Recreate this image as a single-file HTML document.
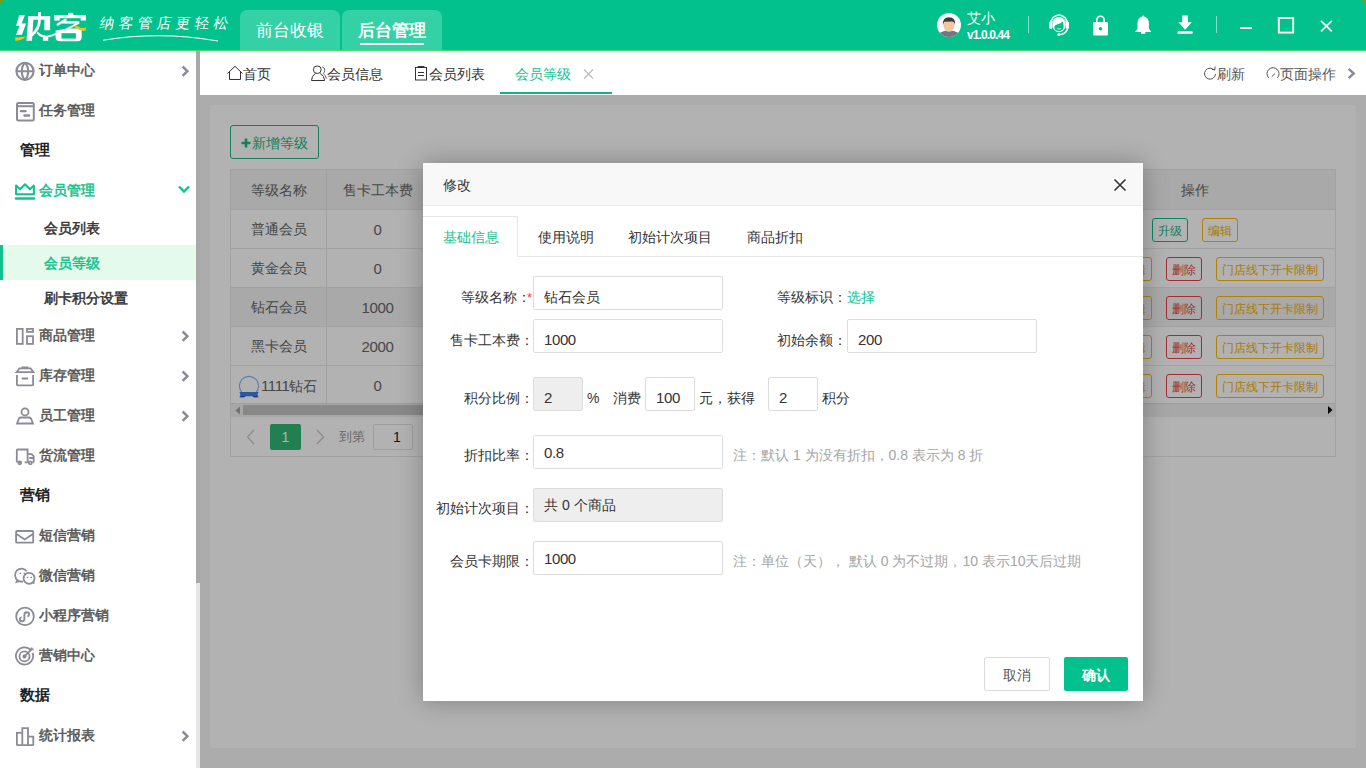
<!DOCTYPE html>
<html><head><meta charset="utf-8">
<style>
*{box-sizing:border-box;margin:0;padding:0}
html,body{width:1366px;height:768px;overflow:hidden;background:#fff;font-family:"Liberation Sans",sans-serif;font-size:14px;color:#333}
.abs{position:absolute}
#hdr{position:absolute;left:0;top:0;width:1366px;height:51px;background:#02c18d;border-bottom:1px solid #4fdc74}
.htab{position:absolute;top:10px;height:40px;width:100px;background:#35d1a6;border-radius:7px 7px 0 0;color:#fff;font-size:17px;text-align:center;line-height:41px}
#side{position:absolute;left:0;top:51px;width:196px;height:717px;background:#fff}
.si{position:absolute;left:0;width:196px;height:40px;line-height:40px;font-size:14px;font-weight:bold;color:#555}
.si .t{position:absolute;left:39px;top:0}
.si svg.ic{position:absolute;left:15px;top:11px}
.si .ar{position:absolute;left:180px;top:15px}
.st{position:absolute;line-height:20px;font-weight:500;white-space:nowrap;-webkit-text-stroke:0.5px currentColor}
.cell{position:absolute;height:39px;line-height:41px;text-align:center;font-size:14px;color:#666;white-space:nowrap}
.btn{position:absolute;height:24px;border:1px solid;border-radius:3px;font-size:12px;line-height:24px;text-align:center;white-space:nowrap;background:transparent}
.mt{position:absolute;top:64px;line-height:20px;font-size:14px;color:#333;white-space:nowrap}
.lb{position:absolute;line-height:20px;font-size:14px;color:#333;white-space:nowrap}
.inp{position:absolute;height:34px;border:1px solid #ddd;border-radius:2px;padding-left:10px;line-height:40px;font-size:14px;color:#333;white-space:nowrap}
.dg{font-size:15px;letter-spacing:-0.4px}
.sh{position:absolute;left:20px;font-size:15px;font-weight:bold;color:#222;line-height:20px}
.sub{position:absolute;left:0;width:196px;height:35px;line-height:35px;font-size:14px;font-weight:bold;color:#333}
.sub .t{position:absolute;left:44px;top:0}
#tabbar{position:absolute;left:200px;top:51px;width:1166px;height:44px;background:#fff}
.tt{position:absolute;top:0;height:44px;line-height:46px;font-size:14px;color:#333}
#main{position:absolute;left:200px;top:95px;width:1166px;height:673px;background:#f6f6f6}
#card{position:absolute;left:10px;top:10px;width:1146px;height:643px;background:#fff;border-radius:3px}
table.gt{position:absolute;border-collapse:collapse}
#ov{position:absolute;left:200px;top:95px;width:1166px;height:673px;background:rgba(0,0,0,0.3)}
#modal{position:absolute;left:423px;top:163px;width:720px;height:538px;background:#fff;box-shadow:0 0 24px rgba(0,0,0,.28)}
</style></head>
<body>
<!-- HEADER -->
<div id="hdr">
  <svg class="abs" style="left:0;top:0" width="240" height="50">
   <g fill="#fff">
    <path d="M19.2 15.2H24.9L21.6 23.6H26.1L21.9 34.8H16L19.5 26H16Z"/>
    <path d="M28.4 16.2H33.6L32 40.8H26.4Z"/>
    <path d="M28.4 16.2H50.1V19.7H28.4Z"/>
    <path d="M44.4 16.2H50.1V30.2H44.3Z"/>
    <path d="M38 12H40.9V19.7H38Z"/>
    <path d="M39.5 19.5Q39.6 28.5 31.5 35.5" fill="none" stroke="#fff" stroke-width="2.8"/>
    <path d="M42.9 37H48.2V40.8H42.9Z"/>
    <path d="M37.6 31.6Q41 35.6 46.5 35.8Q55 35 79.2 21.6L79.6 23.6Q62 33 52 36.5Q46 38.2 41.5 37Q38.5 36 36.8 33.6Z"/>
    <path d="M54.3 15H86V18.2H54.3Z"/><path d="M54.3 15H59.7V20.6H54.3Z"/><path d="M80.7 15H86V20.6H80.7Z"/><path d="M68 12.8H73.2V15.5H68Z"/>
    <path d="M57.8 24.6L65.6 19.7" fill="none" stroke="#fff" stroke-width="2.4" stroke-linecap="round"/>
    <path d="M62.2 22.4H78.8" fill="none" stroke="#fff" stroke-width="2.4"/>
    <path d="M55.6 30.4Q64 29.4 70 28.6H81.7V37.6Q81.7 41.3 77.6 41.3H60Q55.6 41.3 55.6 37.6Z"/>
   </g>
   <path d="M61.5 33.2H75.9V38.6H61.5Z" fill="#02c18d"/>
   <path d="M15.2 37.6Q20.5 37.3 25.5 36.4Q24.5 38.6 20.8 39.7Q17.8 40.7 15.4 40.9Z" fill="#fcc20a"/>
   <path d="M73.7 26.2Q77.5 25.6 80 27.4Q83 28.6 86 27.2L85.7 30.6Q81.5 31.2 78.5 29.6Q76 28 73.7 26.2Z" fill="#fcc20a"/>
   <path d="M103 40.3Q160 31 218 41" fill="none" stroke="#fff" stroke-width="1.1"/>
  </svg>
  <div class="abs" style="left:100px;top:10px;font-size:14.5px;font-weight:300;color:#fff;line-height:26px;letter-spacing:4px;transform:skewX(-10deg)">纳客管店更轻松</div>
  <div class="htab" style="left:240px">前台收银</div>
  <div class="htab" style="left:342px;font-weight:bold">后台管理<div class="abs" style="left:18px;top:33px;width:64px;height:2px;background:#fff"></div></div>
  <!-- avatar -->

  <svg class="abs" style="left:0;top:0" width="1366" height="50">
   <defs><clipPath id="avc"><circle cx="949" cy="25" r="12"/></clipPath></defs>
   <circle cx="949" cy="25" r="12" fill="#fff"/>
   <g clip-path="url(#avc)">
    <path d="M937 37Q938 31 949 30.5Q960 31 961 37Z" fill="#75758a"/>
    <path d="M946.8 28H951.2V31.5H946.8Z" fill="#f2c29a"/>
    <ellipse cx="949" cy="25.5" rx="5.6" ry="6" fill="#f4c7a0"/>
    <path d="M943 25Q942.2 17.5 949 17.3Q955.8 17.5 955 25Q954.5 21.8 952 21.5Q949 21.6 944.5 21.8Q943.5 22.5 943 25Z" fill="#3b3b3b"/>
   </g>
   <!-- headset -->
   <g fill="#fff">
    <path d="M1050.4 24.5A8.6 9.6 0 0 1 1067.6 24.5" fill="none" stroke="#fff" stroke-width="1.5"/>
    <path d="M1052.3 22.5A7 7.2 0 0 1 1065.7 22.5" fill="none" stroke="#fff" stroke-width="0.9"/>
    <rect x="1049" y="22" width="3.4" height="6.8" rx="1"/><rect x="1065.6" y="22" width="3.4" height="6.8" rx="1"/>
    <ellipse cx="1059" cy="24.8" rx="6.6" ry="7.4"/>
    <path d="M1054.3 27.8Q1054.3 24.8 1057.8 24.3Q1061 23.6 1062.6 21.3Q1063.9 25 1063.6 27.6Q1063.1 31 1059 31.1Q1054.9 31 1054.3 27.8Z" fill="#02c18d"/>
    <path d="M1057.2 28.6Q1059 29.4 1060.8 28.6" stroke="#fff" stroke-width="0.8" fill="none"/>
    <path d="M1067.6 28.5Q1066.5 33.8 1059.5 34.6" fill="none" stroke="#fff" stroke-width="1.3"/>
    <circle cx="1058.8" cy="34.6" r="1.5"/>
   </g>
   <!-- lock -->
   <path d="M1096.8 22.5V20A3.7 3.8 0 0 1 1104.2 20V22.5" fill="none" stroke="#fff" stroke-width="1.6"/>
   <rect x="1093" y="22" width="15" height="13.5" rx="1.2" fill="#fff"/>
   <circle cx="1100.5" cy="28.7" r="1.8" fill="#02c18d"/>
   <!-- bell -->
   <path d="M1143.2 15.5Q1144.2 15.5 1144.2 16.6Q1148.8 17.8 1148.9 23.5V28.6Q1149.3 30.5 1151.1 31.2V31.9H1135.3V31.2Q1137.1 30.5 1137.5 28.6V23.5Q1137.6 17.8 1142.2 16.6Q1142.2 15.5 1143.2 15.5Z" fill="#fff"/>
   <rect x="1141" y="32" width="4.4" height="1.8" rx="0.6" fill="#fff"/>
   <!-- download -->
   <path d="M1182.2 15.5H1188V22.3H1191.8L1185.1 29.7L1178.4 22.3H1182.2Z" fill="#fff"/>
   <rect x="1177.5" y="31.3" width="15.2" height="2.4" rx="0.8" fill="#fff"/>
   <!-- window controls -->
   <rect x="1240" y="27" width="12" height="2" fill="#fff"/>
   <rect x="1278.8" y="18" width="14.4" height="14.6" fill="none" stroke="#fffde8" stroke-width="1.9"/>
   <path d="M1321 20.8L1331.8 31.3M1331.8 20.8L1321 31.3" stroke="#fff" stroke-width="1.8"/>
  </svg>
  <div class="abs" style="left:967px;top:9px;font-size:14px;color:#fff;line-height:18px">艾小</div>
  <div class="abs" style="left:967px;top:28px;font-size:12px;font-weight:bold;color:#fff;line-height:14px;letter-spacing:-0.9px">v1.0.0.44</div>
  <div class="abs" style="left:1028px;top:16px;width:1px;height:17px;background:rgba(255,255,255,.5)"></div>
  <div class="abs" style="left:1216px;top:16px;width:1px;height:17px;background:rgba(255,255,255,.5)"></div>
</div>


<!-- SIDEBAR -->
<div id="side">
<svg class="abs" style="left:0;top:0" width="196" height="717" viewBox="0 51 196 717" fill="none" stroke="#8b8b97" stroke-width="1.8">
 <!-- globe -->
 <g stroke-width="2.1"><circle cx="25" cy="71.3" r="8.6"/><path d="M16.4 71.3H33.6M25 62.7C20.8 66.5 20.8 76 25 79.9M25 62.7C29.2 66.5 29.2 76 25 79.9"/></g>
 <!-- task -->
 <g stroke-width="2"><rect x="17" y="103" width="16.8" height="17.6" rx="1.5"/><path d="M17 106.2H33.8"/><path d="M20.8 111.2H25.6M24.4 115.5H29.2" stroke-width="2.3" stroke-linecap="round"/></g>
 <!-- crown green -->
 <path d="M16.1 185.6L20.1 189.3L25 184.3L29.9 189.3L33.9 185.6V194.3H16.1Z" stroke="#12c28d" stroke-width="2.1" stroke-linejoin="round"/><path d="M16.1 194.6H33.9" stroke="#12c28d" stroke-width="1.2"/><path d="M16 198.5H34" stroke="#12c28d" stroke-width="2.4" stroke-linecap="round"/>
 <!-- goods -->
 <rect x="16.9" y="328.9" width="5.8" height="15" /><rect x="27" y="328.9" width="6" height="3" /><rect x="27" y="336.2" width="6" height="7.7"/>
 <!-- stock -->
 <path d="M21.5 367.5H28.5M16.5 372.2L19.5 368.4H30.5L33.5 372.2Z" /><path d="M16.9 375V384.5Q16.9 385.3 17.7 385.3H32.3Q33.1 385.3 33.1 384.5V375M21.8 378.5H28.2"/>
 <!-- staff -->
 <circle cx="25" cy="411.9" r="3.5"/><path d="M17 423.5L19 418.5Q19.8 417.5 21 417.5H29Q30.2 417.5 31 418.5L33 423.5Z"/>
 <!-- truck -->
 <path d="M16.8 462.4V450.3Q16.8 449.5 17.6 449.5H27.6V462.4M27.6 454.1H31.5L33.7 456.2V462.4M29.2 458H33.7"/><path d="M18 462.4H21M24.6 462.4H28.9M32.6 462.4H33.7" /><circle cx="19.7" cy="462.8" r="1.5"/><circle cx="30.4" cy="462.8" r="1.5"/>
 <!-- envelope -->
 <rect x="16.1" y="531" width="17.1" height="11.7" rx="0.8"/><path d="M16.5 534L24.7 539.4L33 534"/>
 <!-- wechat -->
 <path d="M26.8 571.2A6.5 6.5 0 1 0 17.6 580.2L16.7 581.9L19.6 581.1A6.5 6.5 0 0 0 23 581.5"/><circle cx="29.1" cy="578.3" r="5.5"/><path d="M33 582.5L34.4 583.5" />
 <path d="M19.4 573.3H21M23.6 573.3H25.2M26.7 577.3H28.2M30.4 577.3H32" stroke-width="1.3"/>
 <!-- mini program -->
 <circle cx="25" cy="616.4" r="8.8"/><path d="M21.6 617.2Q19.8 617.7 19.8 619.6Q19.8 621.2 22 621.3Q24.4 621.3 24.4 618.7V614.8Q24.4 612.3 26.9 612.3Q29.1 612.4 29.1 614.3Q29.1 616 27.4 616.5" stroke-width="1.9"/>
 <!-- target -->
 <path d="M31.3 650.6A8.6 8.6 0 1 0 32.6 652.9" /><circle cx="24.5" cy="656.4" r="5"/><circle cx="24.5" cy="656.4" r="1.2" fill="#8b8b97"/><path d="M25 655.9L32.5 648.4M31.5 647.5V649.4H33.5"/>
 <!-- bars -->
 <path d="M16.9 745V732.9H22.3V745M22.3 745V728.2H28V745M28 745V736.6H33.3V745M16.5 745.1H33.7"/>
 <!-- arrows -->
 <g stroke-width="2.5"><path d="M182.6 66.5L187.4 71.2L182.6 75.9"/><path d="M182.6 331.5L187.4 336.2L182.6 340.9"/><path d="M182.6 371.5L187.4 376.2L182.6 380.9"/><path d="M182.6 411.5L187.4 416.2L182.6 420.9"/><path d="M182.6 731.5L187.4 736.2L182.6 740.9"/></g>
 <path d="M179 186.5L184 191.5L189 186.5" stroke="#12c28d" stroke-width="2.4"/>
</svg>
<div style="position:absolute;left:0;top:194px;width:196px;height:35px;background:#e4fbec"></div>
<div style="position:absolute;left:0;top:194px;width:3px;height:35px;background:#12c28d"></div>
</div>
<div class="abs" style="left:196px;top:51px;width:4px;height:532px;background:#a9a9a9"></div>
<div class="abs" style="left:196px;top:583px;width:4px;height:185px;background:#e6e6e6"></div>
<div class="st" style="left:39px;top:60px;font-size:14px;color:#555">订单中心</div>
<div class="st" style="left:39px;top:100px;font-size:14px;color:#555">任务管理</div>
<div class="st" style="left:20px;top:140px;font-size:15px;color:#222;font-weight:bold;-webkit-text-stroke:0">管理</div>
<div class="st" style="left:39px;top:180px;font-size:14px;color:#12c28d">会员管理</div>
<div class="st" style="left:44px;top:218px;font-size:14px;color:#333">会员列表</div>
<div class="st" style="left:44px;top:253px;font-size:14px;color:#12c28d">会员等级</div>
<div class="st" style="left:44px;top:288px;font-size:14px;color:#333">刷卡积分设置</div>
<div class="st" style="left:39px;top:325px;font-size:14px;color:#555">商品管理</div>
<div class="st" style="left:39px;top:365px;font-size:14px;color:#555">库存管理</div>
<div class="st" style="left:39px;top:405px;font-size:14px;color:#555">员工管理</div>
<div class="st" style="left:39px;top:445px;font-size:14px;color:#555">货流管理</div>
<div class="st" style="left:20px;top:485px;font-size:15px;color:#222;font-weight:bold;-webkit-text-stroke:0">营销</div>
<div class="st" style="left:39px;top:525px;font-size:14px;color:#555">短信营销</div>
<div class="st" style="left:39px;top:565px;font-size:14px;color:#555">微信营销</div>
<div class="st" style="left:39px;top:605px;font-size:14px;color:#555">小程序营销</div>
<div class="st" style="left:39px;top:645px;font-size:14px;color:#555">营销中心</div>
<div class="st" style="left:20px;top:685px;font-size:15px;color:#222;font-weight:bold;-webkit-text-stroke:0">数据</div>
<div class="st" style="left:39px;top:725px;font-size:14px;color:#555">统计报表</div>

<!-- TABBAR -->
<div id="tabbar">
<svg class="abs" style="left:0;top:0" width="1166" height="44" viewBox="200 51 1166 44" fill="none" stroke="#333" stroke-width="1">
 <path d="M227.5 73.5L235 66.3L242.5 73.5M229.5 71.5V79.5H240.5V71.5" />
 <ellipse cx="317.3" cy="69.7" rx="3.9" ry="3.8"/><path d="M315.5 73.4Q311.5 76 311.5 80.5H324.6Q324.6 76 320.2 73.4"/><path d="M322.2 66.8Q324.8 67.5 324.8 70.2Q324.8 72.5 323.2 73.6Q326 75.2 326.4 78.8" stroke="#555" stroke-width="0.9"/>
 <rect x="415.5" y="67.5" width="11" height="12.5"/><path d="M418 67.5V66.5H424V67.5M418 72.5H424M418 75.5H424"/>
 <path d="M584 69.5L593 78.5M593 69.5L584 78.5" stroke="#bbb" stroke-width="1.2"/>
 <path d="M1214.5 70.5A5.5 5.5 0 1 0 1215.5 74" stroke="#555"/><path d="M1212 69.5H1215V66.5" stroke="#555"/>
 <path d="M1268.6 77.8A6 6 0 1 1 1277.4 77.8M1271.8 76.6L1275.2 73.4" stroke="#555"/>
 <path d="M1348.6 68.8L1353.8 73.5L1348.6 78.2" stroke="#8b8b97" stroke-width="2.4"/>
</svg>
<div class="tt" style="left:43px">首页</div>
<div class="tt" style="left:127px">会员信息</div>
<div class="tt" style="left:229px">会员列表</div>
<div class="tt" style="left:315px;color:#12c28d">会员等级</div>
<div class="abs" style="left:300px;top:41px;width:112px;height:2px;background:#12b47f"></div>
<div class="tt" style="left:1017px;color:#555">刷新</div>
<div class="tt" style="left:1080px;color:#555">页面操作</div>
</div>

<!-- MAIN -->
<div id="main"><div id="card"></div></div>
<div class="abs" style="left:230px;top:125px;width:89px;height:34px;border:1px solid #22b583;border-radius:3px;color:#22b583;font-size:14px;line-height:35px;padding-left:10px;white-space:nowrap"><svg width="10" height="10" style="position:relative;top:0px;margin-right:1px"><path d="M5 0.5V9.5M0.5 5H9.5" stroke="#22b583" stroke-width="2.6"/></svg>新增等级</div>
<!-- table -->
<div class="abs" style="left:230px;top:169px;width:1106px;height:288px;border:1px solid #e8e8e8;background:#fff"></div>
<div class="abs" style="left:231px;top:170px;width:1104px;height:39px;background:#f2f2f2"></div>
<div class="abs" style="left:231px;top:287px;width:1104px;height:39px;background:#f2f2f2"></div>
<div class="abs" style="left:231px;top:209px;width:1104px;height:1px;background:#e8e8e8"></div>
<div class="abs" style="left:231px;top:248px;width:1104px;height:1px;background:#e8e8e8"></div>
<div class="abs" style="left:231px;top:287px;width:1104px;height:1px;background:#e8e8e8"></div>
<div class="abs" style="left:231px;top:326px;width:1104px;height:1px;background:#e8e8e8"></div>
<div class="abs" style="left:231px;top:365px;width:1104px;height:1px;background:#e8e8e8"></div>
<div class="abs" style="left:326px;top:170px;width:1px;height:234px;background:#e8e8e8"></div>
<div class="abs" style="left:428px;top:170px;width:1px;height:234px;background:#e8e8e8"></div>
<!-- scrollbar -->
<div class="abs" style="left:231px;top:403px;width:1104px;height:14px;background:#efefef;border-top:1px solid #e3e3e3"></div>
<div class="abs" style="left:243px;top:405px;width:900px;height:10px;background:#c4c4c4"></div>
<svg class="abs" style="left:234px;top:406px" width="8" height="9"><path d="M6 0.5V8.5L1.5 4.5Z" fill="#a3a3a3"/></svg>
<svg class="abs" style="left:1326px;top:405px" width="8" height="10"><path d="M2 1V9L6.5 5Z" fill="#000"/></svg>
<!-- cells -->
<div class="cell" style="left:231px;top:170px;width:95px">等级名称</div>
<div class="cell" style="left:327px;top:170px;width:101px">售卡工本费</div>
<div class="cell" style="left:1055px;top:170px;width:280px">操作</div>
<div class="cell" style="left:231px;top:209px;width:95px">普通会员</div><div class="cell" style="left:327px;top:209px;width:101px"><span class="dg">0</span></div>
<div class="cell" style="left:231px;top:248px;width:95px">黄金会员</div><div class="cell" style="left:327px;top:248px;width:101px"><span class="dg">0</span></div>
<div class="cell" style="left:231px;top:287px;width:95px">钻石会员</div><div class="cell" style="left:327px;top:287px;width:101px"><span class="dg">1000</span></div>
<div class="cell" style="left:231px;top:326px;width:95px">黑卡会员</div><div class="cell" style="left:327px;top:326px;width:101px"><span class="dg">2000</span></div>
<div class="cell" style="left:261px;top:365px;width:70px;text-align:left"><span class="dg">1111</span>钻石</div><div class="cell" style="left:327px;top:365px;width:101px"><span class="dg">0</span></div>
<svg class="abs" style="left:237px;top:374px" width="24" height="26"><circle cx="12" cy="12" r="9.6" fill="none" stroke="#8ab4f4" stroke-width="1.1"/><path d="M2.5 18H21.5L20.6 20.5L21.5 23.5H17L16 22.3H8L7 23.5H2.5L3.4 20.5Z" fill="#3d7fe6"/><path d="M4 22.5H8.2M15.8 22.5H20" stroke="#1a5ccc" stroke-width="1.2"/></svg>
<div class="btn" style="left:1152px;top:218px;width:36px;border-color:#0cc08c;color:#0cb888">升级</div>
<div class="btn" style="left:1202px;top:218px;width:36px;border-color:#fcb90c;color:#f2b000">编辑</div>
<div class="btn" style="left:1115px;top:257px;width:37px;border-color:#fcb90c;color:#f2b000">编辑</div><div class="btn" style="left:1166px;top:257px;width:36px;border-color:#e8404a;color:#e8404a">删除</div><div class="btn" style="left:1216px;top:257px;width:108px;border-color:#fcb90c;color:#f2b000">门店线下开卡限制</div>
<div class="btn" style="left:1115px;top:296px;width:37px;border-color:#fcb90c;color:#f2b000">编辑</div><div class="btn" style="left:1166px;top:296px;width:36px;border-color:#e8404a;color:#e8404a">删除</div><div class="btn" style="left:1216px;top:296px;width:108px;border-color:#fcb90c;color:#f2b000">门店线下开卡限制</div>
<div class="btn" style="left:1115px;top:335px;width:37px;border-color:#fcb90c;color:#f2b000">编辑</div><div class="btn" style="left:1166px;top:335px;width:36px;border-color:#e8404a;color:#e8404a">删除</div><div class="btn" style="left:1216px;top:335px;width:108px;border-color:#fcb90c;color:#f2b000">门店线下开卡限制</div>
<div class="btn" style="left:1115px;top:374px;width:37px;border-color:#fcb90c;color:#f2b000">编辑</div><div class="btn" style="left:1166px;top:374px;width:36px;border-color:#e8404a;color:#e8404a">删除</div><div class="btn" style="left:1216px;top:374px;width:108px;border-color:#fcb90c;color:#f2b000">门店线下开卡限制</div>

<!-- pagination -->
<svg class="abs" style="left:245px;top:429px" width="12" height="16"><path d="M9 1L2.5 8L9 15" fill="none" stroke="#c8c8c8" stroke-width="1.3"/></svg>
<div class="abs" style="left:270px;top:424px;width:31px;height:26px;background:#32b772;border-radius:2px;color:#fff;text-align:center;line-height:27px;font-size:14px">1</div>
<svg class="abs" style="left:314px;top:429px" width="12" height="16"><path d="M3 1L9.5 8L3 15" fill="none" stroke="#c8c8c8" stroke-width="1.3"/></svg>
<div class="abs" style="left:339px;top:427px;font-size:13px;color:#999;line-height:20px">到第</div>
<div class="abs" style="left:373px;top:424px;width:40px;height:26px;border:1px solid #e3e3e3;border-radius:2px;color:#222;text-align:center;line-height:25px;font-size:14px;padding-left:8px">1</div>

<div id="ov"></div>
<div id="modal">
<div class="abs" style="left:0;top:0;width:720px;height:43px;background:#f8f8f8;border-bottom:1px solid #eee"></div>
<div class="abs" style="left:20px;top:12px;font-size:14px;color:#333;line-height:20px">修改</div>
<svg class="abs" style="left:690px;top:15px" width="14" height="14"><path d="M1.5 1.5L12.5 12.5M12.5 1.5L1.5 12.5" stroke="#333" stroke-width="1.6"/></svg>
<!-- tabs -->
<div class="abs" style="left:0;top:93px;width:720px;height:1px;background:#e6e6e6"></div>
<div class="abs" style="left:0;top:53px;width:95px;height:41px;background:#fff;border:1px solid #e6e6e6;border-left:none;border-bottom:none;border-radius:0 2px 0 0"></div>
<div class="mt" style="left:20px;color:#12c28d">基础信息</div>
<div class="mt" style="left:115px">使用说明</div>
<div class="mt" style="left:205px">初始计次项目</div>
<div class="mt" style="left:324px">商品折扣</div>
<!-- form -->
<div class="lb" style="right:612px;top:124px">等级名称：<span style="color:#f33;position:absolute;right:-1px;top:1px;font-size:13px">*</span></div>
<div class="inp" style="left:110px;top:113px;width:190px">钻石会员</div>
<div class="lb" style="left:354px;top:124px">等级标识：<span style="color:#12c28d">选择</span></div>
<div class="lb" style="right:609px;top:167px">售卡工本费：</div>
<div class="inp" style="left:110px;top:156px;width:190px"><span class="dg">1000</span></div>
<div class="lb" style="left:354px;top:167px">初始余额：</div>
<div class="inp" style="left:424px;top:156px;width:190px"><span class="dg">200</span></div>
<div class="lb" style="right:609px;top:225px">积分比例：</div>
<div class="inp" style="left:110px;top:214px;width:50px;background:#eee"><span class="dg">2</span></div>
<div class="lb" style="left:164px;top:225px">%</div>
<div class="lb" style="left:190px;top:225px">消费</div>
<div class="inp" style="left:222px;top:214px;width:50px"><span class="dg">100</span></div>
<div class="lb" style="left:276px;top:225px">元，获得</div>
<div class="inp" style="left:345px;top:214px;width:50px"><span class="dg">2</span></div>
<div class="lb" style="left:399px;top:225px">积分</div>
<div class="lb" style="right:609px;top:282px">折扣比率：</div>
<div class="inp" style="left:110px;top:272px;width:190px;line-height:33px"><span class="dg">0.8</span></div>
<div class="lb" style="left:310px;top:282px;color:#a5a5a5">注：默认 1 为没有折扣，0.8 表示为 8 折</div>
<div class="lb" style="right:609px;top:335px">初始计次项目：</div>
<div class="inp" style="left:110px;top:325px;width:190px;background:#eee;line-height:33px">共 0 个商品</div>
<div class="lb" style="right:609px;top:388px">会员卡期限：</div>
<div class="inp" style="left:110px;top:378px;width:190px;line-height:33px"><span class="dg">1000</span></div>
<div class="lb" style="left:310px;top:388px;color:#a5a5a5">注：单位（天）， 默认 0 为不过期，10 表示10天后过期</div>
<!-- buttons -->
<div class="abs" style="left:561px;top:494px;width:66px;height:34px;border:1px solid #ddd;border-radius:2px;text-align:center;line-height:35px;color:#555;font-size:14px">取消</div>
<div class="abs" style="left:641px;top:494px;width:64px;height:34px;background:#02c18d;border-radius:2px;text-align:center;line-height:37px;color:#fff;font-size:14px;font-weight:bold">确认</div>
</div>
<svg class="abs" style="left:0;top:0" width="1366" height="6"><path d="M0 0H4L0 4Z" fill="#7f9c0a"/><path d="M1366 0H1362L1366 4Z" fill="#7f9c0a"/></svg>
</body></html>
